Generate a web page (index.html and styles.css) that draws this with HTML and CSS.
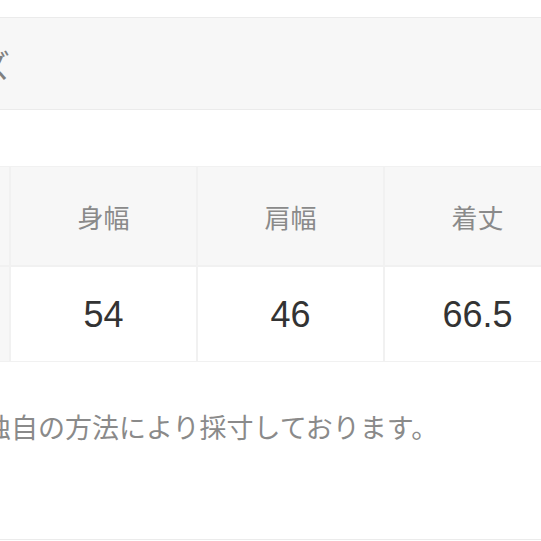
FILE: index.html
```html
<!DOCTYPE html>
<html lang="ja">
<head>
<meta charset="utf-8">
<title>サイズ</title>
<link rel="stylesheet" href="styles.css">
</head>
<body>
<div class="page">
  <div class="titlebar"><span class="title">サイズ</span></div>
  <div class="size-table">
    <div class="cell head side"></div>
    <div class="cell head">身幅</div>
    <div class="cell head">肩幅</div>
    <div class="cell head">着丈</div>
    <div class="cell head side"></div>
    <div class="cell val">54</div>
    <div class="cell val">46</div>
    <div class="cell val">66.5</div>
  </div>
  <p class="note">独自の方法により採寸しております。</p>
  <div class="rule"></div>
</div>
</body>
</html>
```
FILE: styles.css
```css
html, body {
  margin: 0;
  padding: 0;
  background: #fff;
}
body {
  width: 541px;
  height: 541px;
  overflow: hidden;
  font-family: "Liberation Sans", "Noto Sans CJK JP", sans-serif;
}
.page {
  display: flex;
  flex-direction: column;
}
.titlebar {
  margin-top: 17px;
  height: 91px;
  background: #f7f7f7;
  border-top: 1px solid #ebebeb;
  border-bottom: 1px solid #ebebeb;
  display: flex;
  align-items: center;
  overflow: hidden;
}
.title {
  font-family: "Noto Sans CJK JP", sans-serif;
  font-size: 32px;
  color: #808080;
  margin-left: -85px;
  white-space: nowrap;
  line-height: 1;
}
.size-table {
  margin-top: 56px;
  margin-left: -176px;
  width: 800px;
  display: grid;
  grid-template-columns: 185px 185px 185px 185px;
  grid-template-rows: 98px 94px;
  gap: 2px;
  padding: 1px 0;
  background: #f1f1f1;
}
.cell {
  display: flex;
  align-items: center;
  justify-content: center;
}
.head {
  background: #f7f7f7;
  font-family: "Noto Sans CJK JP", sans-serif;
  font-size: 26px;
  color: #8a8a8a;
}
.val {
  background: #fff;
  font-size: 36px;
  color: #333;
  padding-top: 2px;
}
.note {
  margin: 46px 0 0 -16px;
  font-family: "Noto Sans CJK JP", sans-serif;
  font-size: 27px;
  line-height: 38px;
  color: #8a8a8a;
  white-space: nowrap;
}
.rule {
  margin-top: 93px;
  border-top: 1px solid #ebebeb;
}
```
